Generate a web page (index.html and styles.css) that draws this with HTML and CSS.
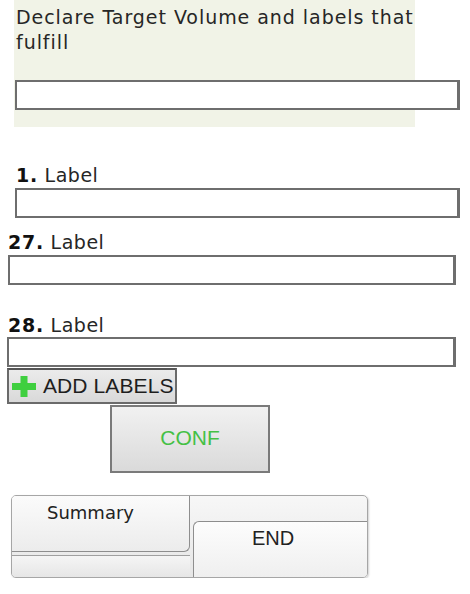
FILE: index.html
```html
<!DOCTYPE html>
<html>
<head>
<meta charset="utf-8">
<link rel="stylesheet" href="styles.css">
</head>
<body>
<div class="page">
  <section class="panel">
    <p class="heading">Declare Target Volume and labels that fulfill</p>
    <input class="field field-wide" type="text">
  </section>

  <div class="group group-a">
    <div class="label-line"><b>1.</b> Label</div>
    <input class="field field-a" type="text">
  </div>

  <div class="group group-b">
    <div class="label-line"><b>27.</b> Label</div>
    <input class="field field-b" type="text">
  </div>

  <div class="group group-c">
    <div class="label-line"><b>28.</b> Label</div>
    <input class="field field-c" type="text">
  </div>

  <button class="add-btn" type="button">
    <svg class="plus" width="24" height="21" viewBox="0 0 24 21"><rect x="8.5" y="0" width="7" height="21" fill="#3fcf3f"/><rect x="0" y="7" width="24" height="7" fill="#3fcf3f"/></svg>
    <span>ADD LABELS</span>
  </button>

  <button class="conf-btn" type="button">CONF</button>

  <div class="tabs">
    <div class="tab tab-summary">Summary</div>
    <div class="tab tab-end">END</div>
    <div class="tab-strip"></div>
  </div>
</div>
</body>
</html>
```

FILE: styles.css
```css
html, body {
  margin: 0;
  padding: 0;
  background: #ffffff;
}

.page {
  display: flex;
  flex-direction: column;
  align-items: flex-start;
  font-family: "DejaVu Sans", Verdana, sans-serif;
  color: #262626;
}

.panel {
  width: 400px;
  margin-left: 14px;
  padding: 5px 0 17px 1px;
  background: #f1f3e7;
  display: flex;
  flex-direction: column;
  align-items: flex-start;
}

.heading {
  margin: 0;
  padding-left: 1px;
  font-size: 19px;
  line-height: 25px;
  letter-spacing: 0.95px;
}

.field {
  box-sizing: border-box;
  height: 30px;
  margin: 0;
  padding: 0;
  border: 2px solid #6e6e6e;
  border-right-width: 3px;
  background: #ffffff;
  outline: none;
}

.field-wide {
  width: 445px;
  margin-top: 25px;
}

.group {
  display: flex;
  flex-direction: column;
  align-items: flex-start;
}

.label-line {
  font-size: 19px;
  line-height: 22px;
  height: 22px;
  margin-bottom: 2px;
  letter-spacing: 0.5px;
}

.label-line b {
  color: #111;
  letter-spacing: 0.8px;
}

.group-a {
  margin-top: 37px;
  margin-left: 15px;
}
.group-a .label-line { padding-left: 1px; }
.field-a { width: 445px; }

.group-b {
  margin-top: 13px;
  margin-left: 8px;
}
.field-b { width: 448px; }

.group-c {
  margin-top: 29px;
  margin-left: 7px;
}
.group-c .label-line { padding-left: 1px; margin-bottom: 1px; }
.field-c { width: 449px; }

.add-btn {
  box-sizing: border-box;
  margin: 1px 0 0 7px;
  width: 170px;
  height: 36px;
  padding: 0 0 0 3px;
  display: flex;
  align-items: center;
  gap: 7px;
  border: 2px solid #6a6a6a;
  border-top-color: #555;
  background: linear-gradient(#ebebeb, #d9d9d9);
  font-family: "Liberation Sans", Arial, sans-serif;
  font-size: 21px;
  color: #1e1e1e;
  letter-spacing: 0.1px;
}

.plus {
  display: block;
  flex: none;
}

.conf-btn {
  box-sizing: border-box;
  margin: 1px 0 0 110px;
  width: 160px;
  height: 68px;
  border: 2px solid #7a7a7a;
  background: linear-gradient(#f1f1f1, #dadada);
  font-family: "Liberation Sans", Arial, sans-serif;
  font-size: 21px;
  color: #45c045;
  padding: 0 0 2px 0;
}

.tabs {
  box-sizing: border-box;
  margin: 22px 0 0 11px;
  width: 357px;
  height: 83px;
  border: 1px solid #a6a6a6;
  border-radius: 5px;
  background: linear-gradient(#f7f7f7, #e6e6e6);
  box-shadow: 1px 1px 2px rgba(0,0,0,0.18);
  display: grid;
  grid-template-columns: 178px 1fr;
  grid-template-rows: 24px 32px 25px;
  overflow: hidden;
}

.tab {
  box-sizing: border-box;
}

.tab-summary {
  grid-column: 1;
  grid-row: 1 / 3;
  border-right: 1px solid #8e8e8e;
  border-bottom: 1px solid #8e8e8e;
  border-bottom-right-radius: 6px;
  background: linear-gradient(#fbfbfb, #ececec);
  font-family: "DejaVu Sans", Verdana, sans-serif;
  font-size: 18px;
  line-height: 20px;
  padding: 7px 0 0 35px;
  color: #222;
}

.tab-end {
  grid-column: 2;
  grid-row: 2 / 4;
  margin-left: 3px;
  margin-top: 1px;
  border-left: 1px solid #8e8e8e;
  border-top: 1px solid #8e8e8e;
  border-top-left-radius: 6px;
  background: linear-gradient(#fdfdfd, #efefef);
  font-family: "Liberation Sans", Arial, sans-serif;
  font-size: 20px;
  line-height: 20px;
  padding: 6px 0 0 58px;
  color: #222;
}

.tab-strip {
  grid-column: 1;
  grid-row: 3;
  margin-top: 3px;
  border-top: 1px solid #a0a0a0;
  background: linear-gradient(#f5f5f5, #e6e6e6);
}
```
